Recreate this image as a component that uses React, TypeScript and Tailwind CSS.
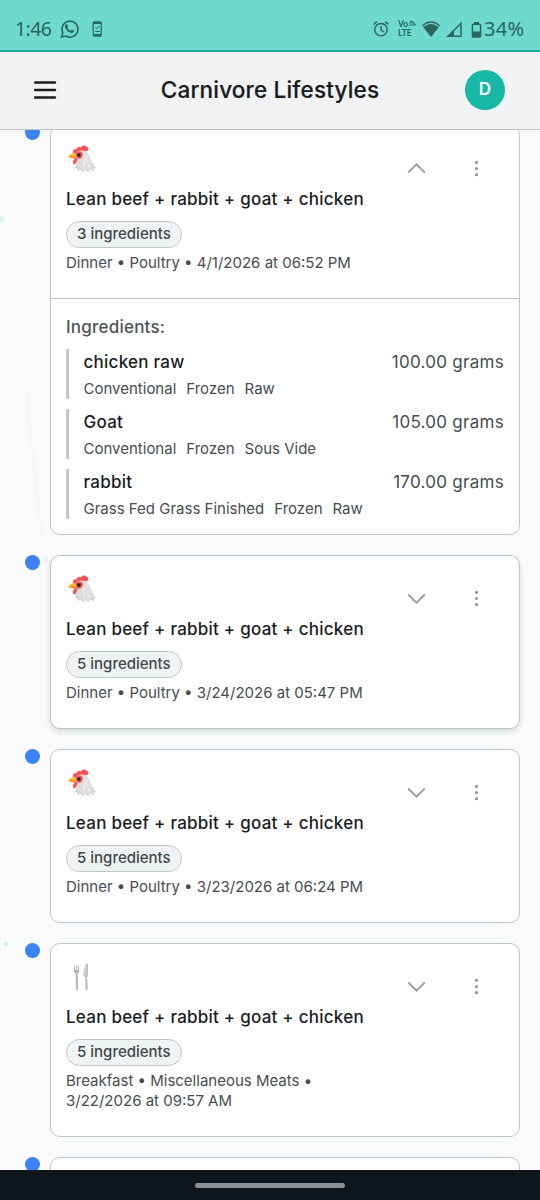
import type { ReactNode } from 'react';

type Ingredient = { name: string; amount: string; tags: string[] };
type Meal = { icon: 'chicken' | 'cutlery'; count: number; meta: string[]; ingredients?: Ingredient[]; raised?: boolean };

const meals: Meal[] = [
  {
    icon: 'chicken',
    count: 3,
    meta: ['Dinner • Poultry • 4/1/2026 at 06:52 PM'],
    ingredients: [
      { name: 'chicken raw', amount: '100.00 grams', tags: ['Conventional', 'Frozen', 'Raw'] },
      { name: 'Goat', amount: '105.00 grams', tags: ['Conventional', 'Frozen', 'Sous Vide'] },
      { name: 'rabbit', amount: '170.00 grams', tags: ['Grass Fed Grass Finished', 'Frozen', 'Raw'] },
    ],
  },
  { icon: 'chicken', count: 5, meta: ['Dinner • Poultry • 3/24/2026 at 05:47 PM'], raised: true },
  { icon: 'chicken', count: 5, meta: ['Dinner • Poultry • 3/23/2026 at 06:24 PM'] },
  { icon: 'cutlery', count: 5, meta: ['Breakfast • Miscellaneous Meats •', '3/22/2026 at 09:57 AM'] },
];

function Chicken() {
  return (
    <svg className="block h-[30px] w-[30px]" viewBox="-2 -1 30 30" fill="none">
      <path d="M5.500 8.200C3.700 5.800 6 3.500 8.500 4.500 8.300 2.300 11.500 1.500 12.800 2.600 13.700-.3 18 0 18.300 1.800c2.500-.5 3.200 4.500-.3 4.500L11 8.700 6 10z" fill="#f2555a" />
      <path d="M8.300 7.500C11 4.800 16.500 4.500 19.800 8.200c2.500 2.800 3.100 6.600 4.700 9.200 1.200 1.700 2.100 3.200 2.400 5.100l-2.300-.7.200 3.500-3.100-2-1.900 3.200-2.600-2.900-2.700 2.800-2-3-3.300 1.500.1-3-2.500.5c1.600-3 1.700-6 .6-10z" fill="#dddfdf" />
      <path d="M8.300 7.500c2.800-2 5.700-1.200 6.500 1 .8 3.300-1.600 5.500-4.600 5.300L7 12z" fill="#f3676b" />
      <path d="M-.1 12C2.500 9 5 7.500 7.500 8.300l1.700 3.500-3 .8z" fill="#fdb32b" />
      <path d="M-.1 12.100l7-1.200 1.500 1.500-3.700.9z" fill="#ee8b22" />
      <path d="M6.500 13c3-.5 3.500 1.300 2.500 3-.8 3-3 4.200-4 2.400-.7-1.700.8-3.500 1.500-5.400z" fill="#f2555a" />
      <circle cx="10.900" cy="10.100" r="2.400" fill="#a03034" />
      <circle cx="10.900" cy="10.100" r="1.400" fill="#2b2526" />
      <path d="M16.600 13v2M20 15.300v2M16.500 18v2M21 20v1.700M18.800 11v1" stroke="#f5f6f6" strokeWidth="1.200" strokeLinecap="round" />
      <path d="M7.500 22.800l2.500-.5-.1 3 3.300-1.500 2 3 2.700-2.800 2.600 2.900 1.900-3.200 3.100 2-.2-3.500 2.300.5" stroke="#a8adad" strokeWidth=".6" />
    </svg>
  );
}

function Cutlery() {
  return (
    <svg className="block h-[30px] w-[30px]" viewBox="0 0 30 30" fill="none">
      <path d="M8 3.500h5.200l-.1 6.200c-.1 1.500-.7 2.200-1.500 2.600l.6 15.200c0 1.300-2.300 1.300-2.300 0l-.1-15.200c-1-.5-1.600-1.200-1.700-2.600z" fill="#c5c6c6" />
      <path d="M9.500 3v5M11.500 3v5" stroke="#fff" strokeWidth=".7" />
      <path d="M8.300 8.200c.3 2 4.200 2 4.700 0M10.800 12.500l.3 14" stroke="#8f9191" strokeWidth=".7" />
      <path d="M21.200 1c.5 4.500.3 9.700-.1 14.200l.5 12.200c0 1.400-2.400 1.400-2.400 0l.1-12.700-2-.7C17.400 8.500 18.500 3.500 21.200 1z" fill="#cfd0d0" />
      <path d="M21.100 1.500c.3 4.700.2 8.700-.1 13.200M18.900 15.200h1.700M20.700 17l.3 10" stroke="#939595" strokeWidth=".7" />
    </svg>
  );
}

function Toggle({ open }: { open: boolean }) {
  return (
    <svg className="block h-6 w-6" viewBox="0 0 24 24" fill="none" stroke="#9ca0aa" strokeWidth="2">
      {open ? <path d="M4.200 16.500l8.300-8.200 8.300 8.200" /> : <path d="M4.200 8.500l8.300 8.200 8.300-8.200" />}
    </svg>
  );
}

function Dots() {
  return (
    <svg className="block h-6 w-6" viewBox="0 0 24 24" fill="#9196a0">
      <circle cx="12.500" cy="6.300" r="1.600" />
      <circle cx="12.500" cy="12.500" r="1.600" />
      <circle cx="12.500" cy="18.700" r="1.600" />
    </svg>
  );
}

function TimelineRow({ children }: { children: ReactNode }) {
  return (
    <div className="flex shrink-0 items-start pr-5 pl-[25px]">
      <span className="mr-2.5 h-[15px] w-[15px] shrink-0 rounded-full bg-[#3d83f5]" />
      {children}
    </div>
  );
}

function MealCard({ meal }: { meal: Meal }) {
  return (
    <TimelineRow>
      <article className={meal.raised ? 'flex-1 rounded-[10px] border border-[#bcc6c7] bg-white shadow-[0_3px_6px_rgba(0,0,0,0.12)]' : 'flex-1 rounded-[10px] border border-[#bcc6c7] bg-white'}>
        <div className="flex items-start justify-between px-[15px] pt-[18px] pb-[25px]">
          <div className="flex flex-col items-start">
            {meal.icon === 'chicken' ? <Chicken /> : <Cutlery />}
            <h2 className="mt-3 text-[17px] leading-[26px] font-medium tracking-[0.240px] whitespace-nowrap text-[#1b1c1f]">Lean beef + rabbit + goat + chicken</h2>
            <span className="mt-[9px] flex h-[27px] items-center rounded-full border border-[#bcc6c7] bg-[#f0f3f4] px-[10px] text-[15px] font-medium text-[#414849]">{meal.count} ingredients</span>
            <div className="mt-[5px] text-[15px] leading-5 whitespace-nowrap text-[#484d4f]">
              {meal.meta.map((line) => <p key={line}>{line}</p>)}
            </div>
          </div>
          <div className="flex gap-9 pt-3 pr-4">
            <button type="button" aria-label="Toggle details"><Toggle open={!!meal.ingredients} /></button>
            <button type="button" aria-label="More options"><Dots /></button>
          </div>
        </div>
        {meal.ingredients && (
          <div className="border-t border-[#bcc6c7] px-[15px] pt-4 pb-[15px]">
            <h3 className="text-[17px] leading-[25px] font-medium tracking-[0.220px] text-[#505557]">Ingredients:</h3>
            <ul className="mt-[9px] flex flex-col gap-[10px]">
              {meal.ingredients.map((item) => (
                <li key={item.name} className="h-[50px] border-l-[3px] border-[#bac8c7] pl-[14.500px]">
                  <div className="flex justify-between text-[17px] leading-[26px]">
                    <span className="font-medium tracking-[0.250px] text-[#1b1c1f]">{item.name}</span>
                    <span className="tracking-[0.280px] text-[#484d4f]">{item.amount}</span>
                  </div>
                  <div className="mt-1 flex gap-[10px] text-[15px] leading-5 text-[#484d4f]">
                    {item.tags.map((tag) => <span key={tag}>{tag}</span>)}
                  </div>
                </li>
              ))}
            </ul>
          </div>
        )}
      </article>
    </TimelineRow>
  );
}

function StatusBar() {
  return (
    <div className="flex h-[52px] shrink-0 items-center justify-between border-b-2 border-[#26a79a] bg-[#6ddacb] pt-2 pr-[15px] pl-[15px] font-['Noto_Sans',sans-serif] text-[20px] text-[#2b6560]">
      <div className="flex items-center">
        <span className="w-[45px] text-[19.500px] tracking-[-0.600px]">1:46</span>
        <svg className="h-5 w-5" viewBox="0.700 0 20 20" fill="none">
          <path d="M2.300 18l1.200-4.300A8 8 0 1 1 6.500 17z" stroke="#2b6560" strokeWidth="1.600" />
          <path d="M6.700 5.500c.5-.4 1.200-.4 1.400.1l.7 1.700c.1.400-.6 1-.8 1.300.8 1.500 1.900 2.500 3.300 3.100.4-.3.900-1.200 1.300-1l1.800.9c.5.400.1 1.500-.4 2-2.700 1.700-7.800-2.300-8.400-5.500-.2-1.200.4-2.100 1.100-2.600z" fill="#2b6560" />
        </svg>
        <svg className="ml-[12px] h-4 w-[11px]" viewBox="0 0 11 16" fill="none" stroke="#2b6560">
          <rect x="1.200" y=".8" width="8" height="14.300" rx="1.200" strokeWidth="1.200" />
          <path d="M1 2h8.500M1 14h8.500" strokeWidth="2" />
          <path d="M3.500 6.500l1.300 1.300 2.600-2.900M3 10.500h5" strokeWidth="1" />
        </svg>
      </div>
      <div className="flex items-center">
        <svg className="h-[18px] w-[18px]" viewBox="0 0 18 18" fill="none" stroke="#2b6560" strokeWidth="1.400">
          <circle cx="9" cy="9.700" r="6.200" />
          <path d="M9 6v4l2.800 2M1.500 4.500l3.400-2.900M16.500 4.500l-3.400-2.900" />
        </svg>
        <div className="relative ml-[8px] flex w-[18px] flex-col font-['Lato',sans-serif] text-[8.500px] leading-[9px] font-bold">
          <span>Vo</span><span>LTE</span>
          <svg className="absolute top-0 left-[10px] h-2 w-2" viewBox="0 0 8 8" fill="none" stroke="#2b6560"><path d="M1 6q2-3 4 0M1 3.700q3-3 5.500 2M2 1.500q4-1 5.500 4" /></svg>
        </div>
        <svg className="ml-[5px] h-[18px] w-5" viewBox="0 0 20 18">
          <path d="M1 5.500C6-.2 14-.2 19 5.500L10 17z" fill="#2b6560" />
          <path d="M2.300 6.600q7.700-6.300 15.400 0" fill="none" stroke="#6ddacb" strokeWidth="1.200" />
        </svg>
        <svg className="ml-[5px] h-[17px] w-[17px]" viewBox="0 0 17 17">
          <path d="M2 15.300L15 2.300v13z" fill="none" stroke="#2b6560" strokeWidth="1.500" />
          <path d="M1 16L8 9v7z" fill="#2b6560" />
        </svg>
        <svg className="ml-[8px] h-[17px] w-[11px]" viewBox="0 0 11 17">
          <path d="M3 1h5v2H3z" fill="#2b6560" />
          <rect x="1.400" y="3.200" width="8.200" height="12.700" rx="1" fill="none" stroke="#2b6560" strokeWidth="1.500" />
          <path d="M1.400 10.500h8.200v5.500H1.400z" fill="#2b6560" />
        </svg>
        <span className="ml-[2px] w-[41px] tracking-[0.300px]">34%</span>
      </div>
    </div>
  );
}

export default function App() {
  return (
    <div className="flex h-[1200px] w-[540px] flex-col overflow-hidden bg-[#f8fafb] font-['Inter',sans-serif]">
      <StatusBar />
      <header className="flex h-[78px] shrink-0 items-center border-b border-[#bdc2c6] bg-[#f2f3f5] pr-[35px] pb-[2px] pl-[33px]">
        <button type="button" aria-label="Open menu" className="w-[42px]">
          <svg className="block h-6 w-6" viewBox="0 0 24 24" stroke="#1a1c1e" strokeWidth="2.500" strokeLinecap="round"><path d="M2.200 4.500h19.800M2.200 12h19.800M2.200 19.500h19.800" /></svg>
        </button>
        <h1 className="flex-1 text-center text-[22.500px] leading-8 font-medium tracking-[0.180px] whitespace-nowrap text-[#1a1c1e] [-webkit-text-stroke:0.200px_#1a1c1e]">Carnivore Lifestyles</h1>
        <div className="flex h-10 w-10 items-center justify-center rounded-full bg-[#17b8a6] text-[17px] font-semibold text-white">D</div>
      </header>
      <main className="relative min-h-0 flex-1 overflow-hidden">
        <svg className="absolute inset-0 h-full w-full" viewBox="0 0 540 1040" fill="none">
          <ellipse cx="1" cy="89" rx="3.500" ry="2.500" fill="#dcefeb" />
          <circle cx="6" cy="814" r="2.300" fill="#ccebe4" />
          <circle cx="46" cy="430" r="2" fill="#e5f1f0" />
          <path d="M26 258l8 80 8 70" stroke="#f5f8f9" strokeWidth="3" />
        </svg>
        <div className="relative -mt-[5px] flex flex-col gap-5">
          {meals.map((meal, i) => <MealCard key={i} meal={meal} />)}
          <TimelineRow><article className="h-40 flex-1 rounded-[10px] border border-[#bcc6c7] bg-white" /></TimelineRow>
        </div>
      </main>
      <footer className="flex h-[30px] shrink-0 items-center justify-center bg-[#0d161a]">
        <div className="h-[5px] w-[150px] rounded-full bg-[#8f9295]" />
      </footer>
    </div>
  );
}
